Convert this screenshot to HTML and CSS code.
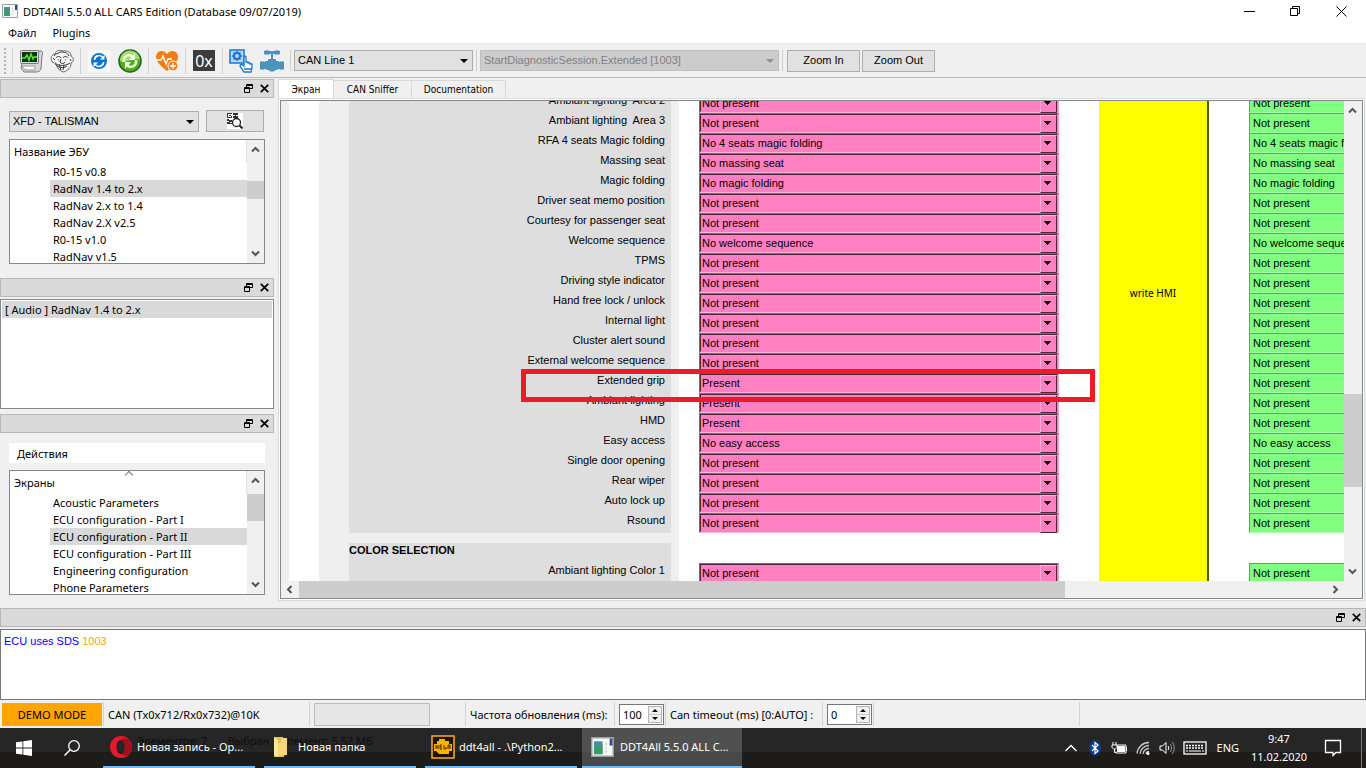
FILE: index.html
```
<!DOCTYPE html>
<html lang="ru">
<head>
<meta charset="utf-8">
<title>DDT4All 5.5.0 ALL CARS Edition</title>
<link rel="stylesheet" href="styles.css">
</head>
<body>
<svg class="defs" aria-hidden="true">
  <symbol id="float" viewBox="0 0 9 9"><path d="M2.5 3V.5h6v4H6M2.5 1.5h6M.5 3.5h5v5h-5zM.5 4.5h5" fill="none" stroke="#000"/></symbol>
  <symbol id="cross" viewBox="0 0 9 9"><path d="M.8.8l7.4 7.4M8.200.8L.8 8.200" fill="none" stroke="#000" stroke-width="1.700"/></symbol>
  <symbol id="up" viewBox="0 0 9 7"><path d="M1 5.500l3.500-3.500L8 5.500" fill="none" stroke="#555" stroke-width="2"/></symbol>
  <symbol id="down" viewBox="0 0 9 7"><path d="M1 1.500l3.500 3.500L8 1.500" fill="none" stroke="#555" stroke-width="2"/></symbol>
  <symbol id="app" viewBox="0 0 16 14"><path fill="#f8f8f8" stroke="#9a9fa3" d="M.5.5h15v13H.5z"/><path fill="#4a8fa0" d="M2 3h6v9H2z"/><path fill="#3f9a6a" d="M2 8l6-3v7H2z"/><path fill="#c8d4da" d="M10 4h1v2h-1zM10 7h1v1h-1zM10 9h1v2h-1z"/><path fill="#2d4f83" d="M13 1h2v5h-2z"/></symbol>
</svg>

<header class="titlebar">
  <svg class="titlebar-icon" viewBox="0 0 16 14"><use href="#app"/></svg>
  <h1>DDT4All 5.5.0 ALL CARS Edition (Database 09/07/2019)</h1>
  <div class="window-buttons">
    <button aria-label="Minimize"><svg viewBox="0 0 11 11"><path d="M0 5.500h11"/></svg></button>
    <button aria-label="Restore"><svg viewBox="0 0 11 11"><path d="M.5 2.500h7v7h-7zM2.500 2.500v-2h7v7h-2"/></svg></button>
    <button aria-label="Close"><svg viewBox="0 0 11 11"><path d="M.5.5l10 10M10.500.5l-10 10"/></svg></button>
  </div>
</header>
<nav class="menubar"><button>Файл</button><button>Plugins</button></nav>

<div class="toolbar">
  <span class="grip"></span>
  <div class="tools">
    <button aria-label="Diagnostics"><svg viewBox="0 0 24 24"><path d="M6 2h16c2 0 2 3 1 4l-1 13c0 3-3 4-5 4H5l-3-4z" fill="#d8d8d4" stroke="#777"/><rect x="1.500" y="1.500" width="18" height="13" rx="1" fill="#ddd" stroke="#777"/><path fill="#06380c" d="M3 3h15v10H3z"/><path d="M3 9h3l2-3 2 5 2-6 2 5 1-2h3" fill="none" stroke="#59e03a" stroke-width="1.500"/><path d="M3 17l13 0 0 4H6z" fill="#f8f8f8" stroke="#999"/></svg></button>
    <button aria-label="Expert mode"><svg viewBox="0 0 24 24"><path d="M2 12C0 9 2 5 5 5c1-4 5-4 8-3 5-1 8 2 8 5 3 1 3 6 0 7 0 5-3 7-7 9-5-1-7-4-8-9-2 0-4 0-4-2z" fill="#f4f4f4" stroke="#666"/><path d="M4 7c2-3 4-2 6-4 4 0 7 0 9 4M6 9c1-2 4-2 5 0M13 9c1-2 4-2 5 0M8 11h1M15 11h1M11 10l-1 3c1 2 4 2 5 0M5 15c4 2 11 2 15-1M7 17c3 2 8 2 10 0M9 15l2 6M14 16l-1 5M3 9l2 2M20 10l1 2" fill="none" stroke="#333"/></svg></button>
  </div>
  <div class="tools">
    <button aria-label="Refresh"><svg viewBox="0 0 24 24"><path fill="#f8f8f8" d="M1 1h22v22H1z"/><circle cx="12" cy="12" r="8" fill="#0875d1"/><path d="M7.500 11c0-4 5-6 8-3M16.500 13c0 4-5 6-8 3" fill="none" stroke="#fff" stroke-width="1.700"/><path fill="#fff" d="M17.500 6v4.500H13zM6.500 18v-4.500H11z"/></svg></button>
    <button aria-label="Reload"><svg viewBox="0 0 24 24"><circle cx="12" cy="12" r="11" fill="#4dae22" stroke="#23621e" stroke-width="1.500"/><path d="M2 12a10 10 0 0 1 20-1c-5-4-13 4-20 1z" fill="#9fe06c"/><path d="M6 13c-1-6 5-9 9-5M18 11c1 6-5 9-9 5" fill="none" stroke="#f4ffe8" stroke-width="2.500"/><path fill="#f4ffe8" d="M17 4v7h-6zM7 20v-7h6z"/></svg></button>
  </div>
  <div class="tools"><button aria-label="Health"><svg viewBox="0 0 24 24"><path d="M12 22C6 17 1 13 1 8c0-7 8-8 11-3 3-5 11-4 11 3 0 5-5 9-11 14z" fill="#f07d12"/><path d="M1 11h5l2-4 3 8 2-5h4" fill="none" stroke="#fff" stroke-width="1.500"/><circle cx="18" cy="17" r="5" fill="#f07d12" stroke="#fff"/><path d="M15 17h6M18 14v6" stroke="#fff" stroke-width="1.300"/></svg></button></div>
  <div class="tools tools-hex"><button class="hex" aria-label="Hexadecimal">0x</button></div>
  <div class="tools">
    <button aria-label="Pick"><svg viewBox="0 0 24 24"><path fill="#b8d9fa" stroke="#1477d4" stroke-width="1.500" d="M1 1h14v13H1z"/><circle cx="8" cy="7" r="3" fill="none" stroke="#1477d4" stroke-width="2"/><path d="M8 2v2M8 10v2M3 7h2M11 7h2M4.500 3.500l1.500 1.500M10 9l1.500 1.500M4.500 10.500L6 9M10 5l1.500-1.500" stroke="#1477d4" stroke-width="1.500"/><path d="M15 17V8c0-1 2-1 2 0v5h2v1h2v1h2v4l-1 4h-7l-4-6c0-2 2-2 4 0zM15 20h7" fill="#fff" stroke="#1477d4" stroke-width="1.300"/></svg></button>
    <button aria-label="Valve"><svg viewBox="0 0 24 24"><path fill="#4a93bd" d="M4 2c2-1 4-1 6 0h4c2-1 4-1 6 0v3c-2 1-4 1-6 0h-1v5h3v2h3v1c2-1 4-1 5 0v7c-1 1-3 1-5 0-2 1-3 1-4 1 0 2-6 2-6 0-1 0-2 0-4-1-2 1-4 1-5 0v-7c1-1 3-1 5 0v-1h3v-2h3V5h-1C8 6 6 6 4 5z"/></svg></button>
  </div>
  <label class="combo combo-line"><select aria-label="CAN line"><option>CAN Line 1</option></select></label>
  <label class="combo combo-session"><select aria-label="Session" disabled><option>StartDiagnosticSession.Extended [1003]</option></select></label>
  <button class="push">Zoom In</button>
  <button class="push">Zoom Out</button>
</div>

<main class="workspace">
  <aside class="docks">
    <section class="dock">
      <div class="dock-title"><button aria-label="Float"><svg><use href="#float"/></svg></button><button aria-label="Close"><svg><use href="#cross"/></svg></button></div>
      <div class="dock-body">
        <div class="vehicle">
          <label class="combo"><select aria-label="Vehicle"><option>XFD - TALISMAN</option></select></label>
          <button class="push" aria-label="Scan"><svg viewBox="0 0 16 16"><path fill="#fff" d="M0 0h16v16H0z"/><path fill="#333" d="M0 0h5v1H1v3h3V2H2v1h3v2H0zM6 0h5v2H9v1h2v2H6V3h2V2H6zM0 6h2v1h3v2H3v1h2v1H0V9h2V8H0z"/><circle cx="9.500" cy="9.500" r="4" fill="#fff" stroke="#222" stroke-width="1.300"/><path d="M12.500 12.500l3 3" stroke="#222" stroke-width="2"/></svg></button>
        </div>
        <div class="tree tree-ecu">
          <div class="tree-view">
            <div class="tree-head">Название ЭБУ</div>
            <ul><li>R0-15 v0.8</li><li class="selected">RadNav 1.4 to 2.x</li><li>RadNav 2.x to 1.4</li><li>RadNav 2.X v2.5</li><li>R0-15 v1.0</li><li>RadNav v1.5</li></ul>
          </div>
          <div class="vbar"><svg><use href="#up"/></svg><span class="gap-ecu"></span><span class="thumb thumb-ecu"></span><span class="rest"></span><svg><use href="#down"/></svg></div>
        </div>
      </div>
    </section>
    <section class="dock">
      <div class="dock-title"><button aria-label="Float"><svg><use href="#float"/></svg></button><button aria-label="Close"><svg><use href="#cross"/></svg></button></div>
      <ul class="open-ecus"><li>[ Audio ] RadNav 1.4 to 2.x</li></ul>
    </section>
    <section class="dock">
      <div class="dock-title"><button aria-label="Float"><svg><use href="#float"/></svg></button><button aria-label="Close"><svg><use href="#cross"/></svg></button></div>
      <div class="dock-body dock-screens">
        <div class="actions">Действия</div>
        <div class="tree">
          <div class="tree-view">
            <div class="tree-head sorted">Экраны</div>
            <ul><li>Acoustic Parameters</li><li>ECU configuration - Part I</li><li class="selected">ECU configuration - Part II</li><li>ECU configuration - Part III</li><li>Engineering configuration</li><li>Phone Parameters</li></ul>
          </div>
          <div class="vbar"><svg><use href="#up"/></svg><span class="thumb thumb-screen"></span><span class="rest"></span><svg><use href="#down"/></svg></div>
        </div>
      </div>
    </section>
  </aside>

  <section class="pages">
    <div class="tabs" role="tablist"><button class="active" role="tab">Экран</button><button role="tab">CAN Sniffer</button><button role="tab">Documentation</button></div>
    <div class="page">
      <div class="scroller">
        <div class="canvas">
          <div class="labels">
            <div class="group" id="labels"></div>
            <div class="group group-color"><h2>COLOR SELECTION</h2><label class="name" for="field22">Ambiant lighting Color 1</label></div>
          </div>
          <div class="fields pink" id="pink"></div>
          <button class="write">write HMI</button>
          <div class="fields green" id="green"></div>
          <div class="marker"></div>
        </div>
        <div class="vbar"><svg><use href="#up"/></svg><span class="rest rest-top"></span><span class="thumb thumb-page"></span><span class="rest"></span><svg><use href="#down"/></svg></div>
        <div class="hbar"><svg viewBox="0 0 7 9"><path d="M5.500 1L2 4.500L5.500 8"/></svg><span class="thumb"></span><span class="rest"></span><svg viewBox="0 0 7 9"><path d="M1.500 1L5 4.500L1.500 8"/></svg></div>
      </div>
    </div>
  </section>
</main>

<section class="log">
  <div class="dock-title"><button aria-label="Float"><svg><use href="#float"/></svg></button><button aria-label="Close"><svg><use href="#cross"/></svg></button></div>
  <div class="log-text">ECU uses SDS <span>1003</span></div>
</section>

<footer class="status">
  <div class="demo">DEMO MODE</div>
  <div class="cell cell-can">CAN (Tx0x712/Rx0x732)@10K</div>
  <div class="cell cell-progress"><div class="progress"></div></div>
  <label class="cell cell-rate" for="rate">Частота обновления (ms):</label>
  <div class="cell cell-spin"><div class="spin"><input id="rate" value="100"><span class="steps"><button aria-label="Up"></button><button aria-label="Down"></button></span></div></div>
  <label class="cell cell-timeout" for="timeout">Can timeout (ms) [0:AUTO] :</label>
  <div class="cell cell-spin"><div class="spin"><input id="timeout" value="0"><span class="steps"><button aria-label="Up"></button><button aria-label="Down"></button></span></div></div>
  <div class="cell cell-fill"></div>
  <div class="cell cell-end"></div>
</footer>

<div class="taskbar">
  <div class="ghost"><span>Элементов: 7</span><span>Выбран 1 элемент: 5,52 МБ</span></div>
  <button class="sys" aria-label="Start"><svg viewBox="0 0 16 16"><path fill="#fff" d="M0 2.300L6.500 1.400v6.200H0zM7.300 1.300L16 0v7.600H7.300zM0 8.400h6.500v6.200L0 13.700zM7.300 8.400H16V16l-8.700-1.300z"/></svg></button>
  <button class="sys" aria-label="Search"><svg viewBox="0 0 16 16"><circle cx="10" cy="6" r="5.300" fill="none" stroke="#fff" stroke-width="1.300"/><path d="M6 10L.5 15.500" stroke="#fff" stroke-width="1.500"/></svg></button>
  <div class="apps">
    <button class="task"><svg viewBox="0 0 24 24"><path fill="#e8192c" fill-rule="evenodd" d="M12 1a11 11 0 1 0 0 22 11 11 0 1 0 0-22zm0 4c3 0 4.500 3 4.500 7s-1.500 7-4.500 7-4.500-3-4.500-7 1.500-7 4.500-7z"/><path fill="#a3101d" d="M12 5c2-2 5-2 7-1 5 4 5 12 0 16-2 1-5 1-7-1 5 0 5-14 0-14z"/></svg><span>Новая запись - Op...</span></button>
    <button class="task task-folder"><svg viewBox="0 0 24 24"><path fill="#e8bd55" d="M3 2h9l1 2v18H3z"/><path fill="#ffe69a" d="M3 2l4 3v17l-4-2z"/><path fill="#f7d679" d="M7 8l3-1V3h6v17l-9 1z"/></svg><span>Новая папка</span></button>
    <button class="task"><svg viewBox="0 0 24 24"><path fill="#1a1405" stroke="#ffae1a" stroke-width="1.500" d="M1 1h22v22H1z"/><path fill="#ffb000" d="M6 6h2V4h6v2h4v3h3v7h-3v3H8l-3-3H3V9h3z"/><path d="M5 14v-4M5 12h2M7 14v-4M9 14v-4h2M9 12h2M9 14h2M13 10v4h2v-2M17 14v-4h2v4M17 12h2" fill="none" stroke="#4a2b00"/></svg><span>ddt4all - .\Python2...</span></button>
    <button class="task task-active"><svg viewBox="0 0 16 14"><use href="#app"/></svg><span>DDT4All 5.5.0 ALL C...</span></button>
  </div>
  <div class="tray">
    <svg viewBox="0 0 16 16"><path d="M2.500 11L8 5.500l5.500 5.500" fill="none" stroke="#fff" stroke-width="1.300"/></svg>
    <svg viewBox="0 0 16 16"><ellipse cx="8" cy="8" rx="6" ry="7.500" fill="#0a3d91"/><path d="M5 5l6 6-3 2.500v-11L11 5l-6 6" fill="none" stroke="#fff" stroke-width="1.200"/></svg>
    <svg viewBox="0 0 16 16"><path fill="#fff" d="M6 6h8v6H6z"/><path d="M5 11.500v1.500h10V5H6M15.500 7v4M1 5h5v2c0 1-1 2-2.500 2S1 8 1 7zM2 5V2M5 5V2M3.500 9v3.500H5" fill="none" stroke="#fff"/></svg>
    <svg viewBox="0 0 16 16"><path d="M2 13.500A12 12 0 0 1 14 2.500M5 14a9 9 0 0 1 9-8.500M8 14a6 6 0 0 1 6-5.500M11 14a3 3 0 0 1 3-2.500" fill="none" stroke="#ccc" stroke-width="1.300"/><circle cx="13" cy="13.500" r="1.500" fill="#fff"/></svg>
    <svg viewBox="0 0 16 16"><path d="M1 6h2.500L7 2.500v11L3.500 10H1zM9 6c1 1 1 3 0 4" fill="none" stroke="#fff"/><path d="M11 4c2 2 2 6 0 8M13 2c3 3 3 9 0 12" fill="none" stroke="#999"/></svg>
    <svg class="keyboard" viewBox="0 0 24 14"><rect x="1" y="1" width="22" height="12" fill="none" stroke="#fff" stroke-width="1.300"/><path d="M3 4.500h18M3 7h18" stroke="#fff" stroke-width="1.500" stroke-dasharray="2 1"/><path d="M3 10h2M6 10h12M19 10h2" stroke="#fff"/></svg>
    <span class="lang">ENG</span>
    <div class="clock"><span>9:47</span><span>11.02.2020</span></div>
    <svg class="notice" viewBox="0 0 18 18"><path d="M1.500 1.500h15v12H12l-3 3v-3H1.500z" fill="none" stroke="#fff" stroke-width="1.300"/></svg>
    <span class="peek"></span>
  </div>
</div>
<script src="screen.js"></script>
</body>
</html>
```
FILE: screen.js
```
const rows = [
  ["Ambiant lighting  Area 2", "Not present"],
  ["Ambiant lighting  Area 3", "Not present"],
  ["RFA 4 seats Magic folding", "No 4 seats magic folding"],
  ["Massing seat", "No massing seat"],
  ["Magic folding", "No magic folding"],
  ["Driver seat memo position", "Not present"],
  ["Courtesy for passenger seat", "Not present"],
  ["Welcome sequence", "No welcome sequence"],
  ["TPMS", "Not present"],
  ["Driving style indicator", "Not present"],
  ["Hand free lock / unlock", "Not present"],
  ["Internal light", "Not present"],
  ["Cluster alert sound", "Not present"],
  ["External welcome sequence", "Not present"],
  ["Extended grip", "Present", "Not present"],
  ["Ambiant lighting", "Present", "Not present"],
  ["HMD", "Present", "Not present"],
  ["Easy access", "No easy access"],
  ["Single door opening", "Not present"],
  ["Rear wiper", "Not present"],
  ["Auto lock up", "Not present"],
  ["Rsound", "Not present"],
  ["Ambiant lighting Color 1", "Not present"]
];
const labels = document.getElementById("labels");
const pink = document.getElementById("pink");
const green = document.getElementById("green");
rows.forEach(([name, value, current = value], i) => {
  const last = i === rows.length - 1;
  if (!last) {
    const label = document.createElement("label");
    label.className = "name";
    label.htmlFor = "field" + i;
    label.textContent = name;
    labels.append(label);
  }
  const box = document.createElement("div");
  box.className = last ? "field field-color" : "field";
  const select = document.createElement("select");
  select.id = "field" + i;
  select.add(new Option(value));
  box.append(select);
  pink.append(box);
  const input = document.createElement("input");
  input.readOnly = true;
  input.value = current;
  input.setAttribute("aria-label", name + " (ECU)");
  if (last) input.className = "field-color";
  green.append(input);
});
```
FILE: styles.css
```
* { box-sizing: border-box; }
html, body { height: 100%; }
body { margin: 0; display: flex; flex-direction: column; overflow: hidden; background: #f0f0f0; color: #000; font: 11px/17px "Noto Sans", "Open Sans", sans-serif; }
button, select, input { font: inherit; color: inherit; margin: 0; padding: 0; border: 0; border-radius: 0; background: none; }
select { appearance: none; cursor: default; }
ul { list-style: none; margin: 0; padding: 0; }
h1, h2 { margin: 0; font-size: inherit; font-weight: normal; }
svg { display: block; flex: none; }
.defs { position: absolute; width: 0; height: 0; }

.titlebar { display: flex; align-items: center; height: 22px; background: #fff; padding-left: 2px; flex: none; }
.titlebar-icon { width: 16px; height: 14px; margin-right: 5px; }
.window-buttons { display: flex; margin-left: auto; padding-right: 2px; }
.window-buttons button { width: 46px; height: 22px; display: flex; align-items: center; justify-content: center; }
.window-buttons svg { width: 11px; height: 11px; fill: none; stroke: #000; }
.menubar { display: flex; gap: 16px; padding: 0 8px; height: 22px; align-items: center; background: #fff; flex: none; border-bottom: 1px solid #eaeaea; }

.toolbar { display: flex; align-items: center; height: 34px; border-bottom: 1px solid #b8b8b8; flex: none; }
.toolbar, .log-text, .vehicle { font-family: "Liberation Sans", Arial, sans-serif; }
.tabs { font-family: "DejaVu Sans Condensed", "DejaVu Sans", sans-serif; font-size: 10px; }
.grip { width: 3px; height: 26px; margin: 0 5px 0 4px; border-left: 2px dotted #b4b4b4; }
.tools { display: flex; align-items: center; gap: 7px; height: 26px; min-width: 37px; padding: 0 6px; border-left: 1px solid #d0d0d0; }
.tools-hex { padding: 0 7px; }
.tools button { width: 24px; height: 24px; }
.tools .hex { width: 22px; height: 21px; background: #3c3c3c; color: #fff; font: 16px/19px "Noto Sans", sans-serif; padding-top: 2px; }
.combo { position: relative; display: flex; flex: 1; }
.combo select { flex: 1; min-width: 0; height: 21px; border: 1px solid #adadad; background: #e1e1e1; padding: 0 3px; }
.combo select:disabled { background: #ccc; border-color: #bfbfbf; color: #808080; opacity: 1; }
.combo::after { content: ""; position: absolute; right: 5px; top: 9px; border: 4px solid transparent; border-top-color: #000; border-bottom: 0; }
.toolbar .combo { flex: none; }
.combo-line { width: 186px; padding: 0 3px; border-left: 1px solid #d0d0d0; }
.combo-session { width: 307px; padding: 0 3px; border: solid #d0d0d0; border-width: 0 1px; margin-right: 4px; }
.combo-line::after, .combo-session::after { right: 8px; }
.combo-session::after { border-top-color: #909090; }
.push { display: flex; align-items: center; justify-content: center; height: 22px; border: 1px solid #adadad; background: #e1e1e1; }
.toolbar .push { width: 73px; margin-right: 2px; }

.workspace { flex: 1; min-height: 0; display: flex; padding: 1px 1px 5px 0; gap: 4px; }
.docks { flex: none; width: 274px; display: flex; flex-direction: column; }
.dock { display: flex; flex-direction: column; }
.dock:last-child { flex: 1; min-height: 0; }
.dock-title { display: flex; justify-content: flex-end; align-items: center; gap: 7px; height: 19px; flex: none; padding-right: 4px; border: 1px solid #b8b8b8; background: #dadada; }
.dock-title svg { width: 9px; height: 9px; }
.dock-body { display: flex; flex-direction: column; gap: 7px; padding: 12px 9px 14px; }
.vehicle { display: flex; align-items: center; gap: 7px; }
.vehicle .push { width: 58px; margin-right: 1px; }
.vehicle .push svg { width: 16px; height: 16px; }
.tree { display: flex; border: 1px solid #828790; background: #fff; min-height: 0; overflow: hidden; }
.tree-ecu { height: 125px; }
.tree-view { flex: 1; min-width: 0; overflow: hidden; }
.tree-head { position: relative; height: 23px; padding: 4px 0 0 4px; border-right: 1px solid #e0e0e0; line-height: 16px; }
.sorted::before { content: ""; position: absolute; left: 116px; top: 1px; width: 5px; height: 5px; border: solid #777; border-width: 1px 0 0 1px; transform: rotate(45deg); }
.tree li { height: 17px; margin-left: 40px; padding-left: 3px; white-space: nowrap; }
.selected { background: #d9d9d9; }
.vbar { flex: none; width: 17px; display: flex; flex-direction: column; align-items: stretch; background: #f0f0f0; padding: 6px 0; }
.vbar svg { width: 9px; height: 7px; margin: 0 4px; }
.thumb { background: #cdcdcd; flex: none; }
.rest { flex: 1; }
.gap-ecu { height: 28px; flex: none; }
.thumb-ecu { height: 18px; }
.thumb-screen { height: 27px; margin-top: 10px; }
.open-ecus { height: 110px; margin: 2px 0 5px; border: 1px solid #828790; background: #fff; padding: 1px; }
.open-ecus li { background: #d9d9d9; padding-left: 3px; }
.dock-screens { flex: 1; min-height: 0; gap: 7px; padding: 10px 9px 8px; }
.actions { flex: none; height: 20px; background: #fff; padding: 2px 8px; }
.dock-screens .tree { flex: 1; }

.pages { flex: 1; min-width: 0; display: flex; flex-direction: column; padding-bottom: 2px; }
.tabs { display: flex; align-items: flex-end; height: 19px; flex: none; }
.tabs button { height: 18px; padding: 0 10px; min-width: 78px; border: 1px solid #d9d9d9; border-width: 1px 1px 0 0; }
.tabs button:last-child { min-width: 94px; }
.tabs .active { height: 19px; min-width: 56px; background: #fff; border-left-width: 1px; }
.page { flex: 1; min-height: 0; display: flex; border: 1px solid #dcdcdc; background: #fff; padding: 1px; }
.scroller { flex: 1; min-width: 0; display: grid; grid-template: minmax(0, 1fr) 17px / minmax(0, 1fr) 18px; border: 1px solid #828790; }
.scroller .vbar { width: 18px; }
.canvas { position: relative; overflow: hidden; display: flex; align-items: flex-start; background: #fff; border-left: 8px solid #efefef; font: 11px/20px "Liberation Sans", Arial, sans-serif; }
.labels { flex: none; width: 360px; margin: 0 20px 0 30px; padding: 0 8px 0 30px; background: #efefef; }
.group { background: #dedede; height: 432px; display: flex; flex-direction: column; justify-content: flex-end; padding: 0 6px 3px 0; text-align: right; white-space: pre; }
.group .name { flex: none; height: 20px; }
.group-color { height: 48px; margin-top: 10px; justify-content: flex-start; padding: 0 6px 0 0; }
.group-color h2 { text-align: left; font-weight: bold; line-height: 15px; height: 17px; }
.fields { flex: none; margin-top: -8px; display: flex; flex-direction: column; }
.pink { width: 360px; margin-right: 40px; }
.green { width: 360px; }
.field { position: relative; display: flex; height: 20px; border: 1px solid; border-color: #a85380 #ff9ccd #ffb5da #a85380; }
.field select { flex: 1; background: #ff80c0; border: 1px solid; border-color: #4d263a #ff80c0 #ff80c0 #4d263a; padding: 0 1px; line-height: 16px; }
.field::after { content: ""; position: absolute; right: 1px; top: 1px; width: 15px; height: 16px; border: 1px solid; border-color: #ffb0d8 #4d263a #4d263a #ffb0d8; background: linear-gradient(#000, #000) 3px 5px / 7px 1px no-repeat, linear-gradient(#000, #000) 4px 6px / 5px 1px no-repeat, linear-gradient(#000, #000) 5px 7px / 3px 1px no-repeat, linear-gradient(#000, #000) 6px 8px / 1px 1px no-repeat, #ff80c0; }
.fields .field-color { margin-top: 30px; }
.green input { height: 20px; flex: none; width: 100%; background: #80ff80; border: 1px solid; border-color: #5aa65a #a8ffa8 #a8ffa8 #5aa65a; padding: 0 3px; }
.write { flex: none; width: 110px; height: 576px; margin: -96px 40px 0 0; background: #ff0; border-right: 2px solid #555500; font-family: "Noto Sans", sans-serif; font-size: 10px; }
.marker { position: absolute; left: 232px; top: 268px; width: 574px; height: 33px; border: 5px solid #ed1c24; }
.thumb-page { height: 93px; }
.rest-top { flex: 0 0 280px; }
.hbar { grid-column: 1 / 3; display: flex; align-items: stretch; background: #f0f0f0; padding-right: 17px; }
.hbar svg { width: 7px; height: 9px; margin: 4px 6px 4px 5px; fill: none; stroke: #555; stroke-width: 2; }
.hbar .thumb { width: 72%; }

.log { flex: none; }
.log-text { height: 71px; margin-top: 2px; border: 1px solid #777; background: #fff; color: #00f; padding: 3px; }
.log-text span { color: #ffa500; }
.status { flex: none; display: flex; align-items: center; height: 28px; padding-left: 2px; }
.demo { width: 101px; height: 23px; line-height: 23px; background: #ffa500; text-align: center; border-right: 1px solid #f0f0f0; }
.cell { display: flex; align-items: center; height: 24px; padding: 0 4px; border-left: 1px solid #d4d4d4; white-space: nowrap; }
.cell-can { width: 206px; }
.cell-progress { width: 156px; }
.progress { width: 116px; height: 23px; border: 1px solid #bcbcbc; background: #e6e6e6; }
.cell-rate { width: 149px; }
.cell-spin { padding-right: 1px; }
.cell-timeout { width: 157px; }
.cell-fill { flex: 1; }
.cell-end { flex: none; width: 287px; }
.spin { display: flex; width: 45px; height: 21px; border: 1px solid #777; background: #fff; padding: 1px; }
.spin input { flex: 1; min-width: 0; padding-left: 2px; }
.steps { width: 14px; display: flex; flex-direction: column; border: 1px solid #b4b4b4; background: #f0f0f0; }
.steps button { flex: 1; display: flex; align-items: center; justify-content: center; }
.steps button::after { content: ""; border: 3px solid transparent; border-bottom-color: #000; border-top: 0; }
.steps button + button { border-top: 1px solid #c8c8c8; }
.steps button + button::after { border: 3px solid transparent; border-top-color: #000; border-bottom: 0; }

.taskbar { position: relative; flex: none; display: flex; height: 40px; background: linear-gradient(#262626 24px, #1e1c1b 24px); color: #fff; font-size: 12px; line-height: 16px; }
.ghost { position: absolute; left: 137px; top: 5px; display: flex; gap: 20px; color: #0e0e0e; font-size: 11px; white-space: nowrap; }
.sys { width: 48px; display: flex; align-items: center; justify-content: center; }
.sys svg { width: 16px; height: 16px; }
.apps { display: flex; gap: 9px; padding-left: 7px; }
.task { position: relative; width: 152px; display: flex; align-items: center; gap: 4px; padding: 0 0 0 6px; border-bottom: 2px solid #76b9ed; font-size: 11px; white-space: nowrap; }
.task svg { width: 24px; height: 24px; }
.task-folder { gap: 3px; padding-left: 7px; }
.task-active { width: 160px; margin-left: -4px; padding-left: 9px; gap: 6px; background: linear-gradient(#505050 24px, #484848 24px); }
.task-active svg { height: 20px; width: 23px; }
.tray { margin-left: auto; display: flex; align-items: center; gap: 8px; }
.tray svg { width: 16px; height: 16px; }
.tray .keyboard { width: 24px; height: 14px; }
.lang { margin-left: 2px; font-size: 11px; }
.clock { width: 64px; display: flex; flex-direction: column; text-align: center; font-size: 11px; line-height: 18px; }
.tray .notice { width: 18px; height: 18px; margin-left: 5px; }
.peek { width: 5px; height: 40px; margin-left: 11px; border-left: 1px solid #777; }
```
